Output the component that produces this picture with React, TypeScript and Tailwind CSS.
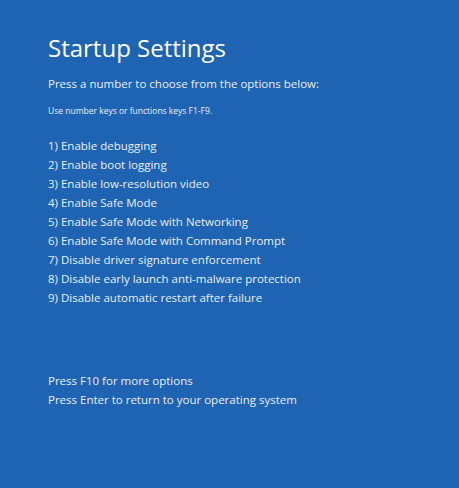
const options = [
  "Enable debugging",
  "Enable boot logging",
  "Enable low-resolution video",
  "Enable Safe Mode",
  "Enable Safe Mode with Networking",
  "Enable Safe Mode with Command Prompt",
  "Disable driver signature enforcement",
  "Disable early launch anti-malware protection",
  "Disable automatic restart after failure",
];

export default function App() {
  return (
    <div
      className="w-[459px] h-[488px] bg-[#1e64b2] text-[#e8eef7] pl-[48px] pt-[31px] flex flex-col"
      style={{ fontFamily: '"Open Sans", "Noto Sans", sans-serif' }}
    >
      <h1 className="text-[24px] leading-[34px] font-normal text-white">Startup Settings</h1>
      <p className="mt-[10px] text-[11.5px] leading-[18px]">Press a number to choose from the options below:</p>
      <p className="mt-[12px] text-[8.5px] leading-[12px]">Use number keys or functions keys F1-F9.</p>
      <ol className="mt-[19px] flex flex-col text-[11.5px] leading-[19px]">
        {options.map((o, i) => (
          <li key={o}>
            {i + 1}) {o}
          </li>
        ))}
      </ol>
      <div className="mt-[64px] flex flex-col text-[11.5px] leading-[19px]">
        <p>Press F10 for more options</p>
        <p>Press Enter to return to your operating system</p>
      </div>
    </div>
  );
}
